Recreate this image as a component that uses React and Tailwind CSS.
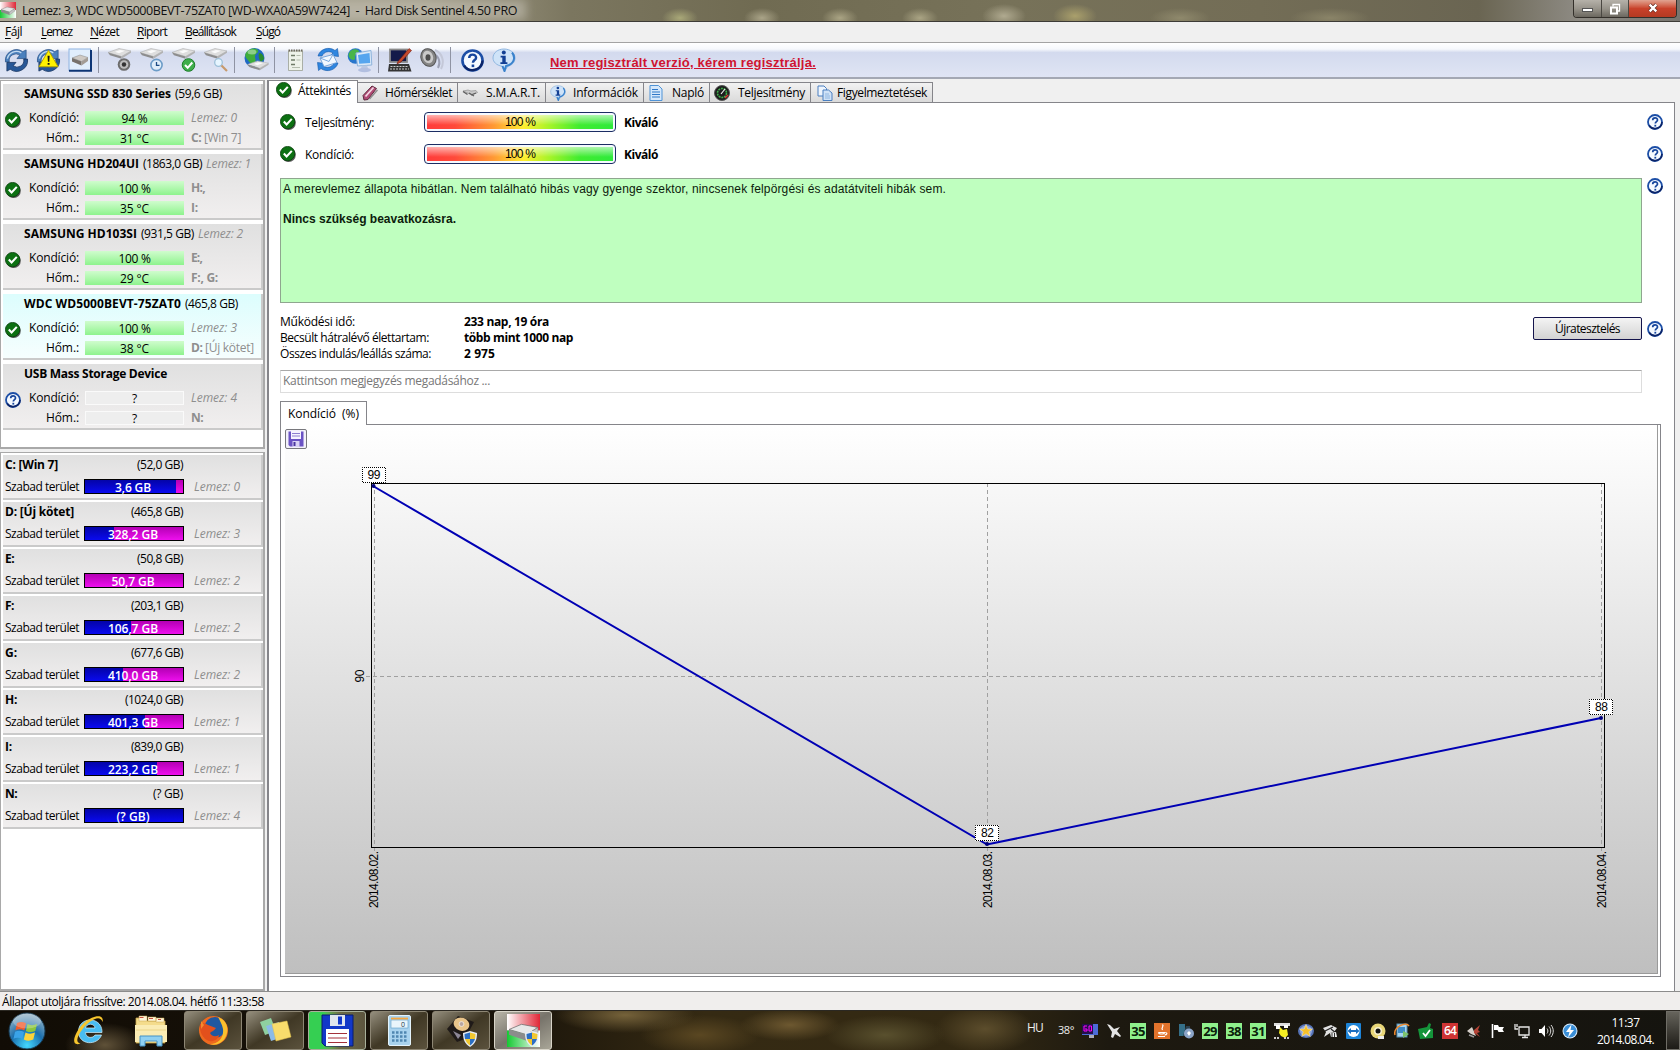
import { useLayoutEffect, useRef, useState } from "react";

/* Text whose tracking is adjusted so that it fills a given width. */
function T({ w, className = "", children }) {
  const ref = useRef(null);
  const [ls, setLs] = useState(0);
  useLayoutEffect(() => {
    const el = ref.current;
    const n = el.textContent.length;
    if (w && n > 1) setLs((w - el.getBoundingClientRect().width) / n);
  }, [w]);
  return (
    <span ref={ref} className={`inline-block whitespace-pre ${className}`} style={{ letterSpacing: ls ? `${ls}px` : undefined }}>
      {children}
    </span>
  );
}

function Check() {
  return (
    <svg className="size-4 shrink-0" viewBox="0 0 16 16">
      <circle cx="8.6" cy="8.8" r="7.2" fill="#222" opacity=".75" />
      <circle cx="7.6" cy="7.6" r="7.2" fill="#0c7012" stroke="#063c0a" strokeWidth=".8" />
      <path d="M3.8 7.6l2.8 2.9 5.2-5.6" fill="none" stroke="#fff" strokeWidth="2.1" />
    </svg>
  );
}

function Help({ size = "size-4" }) {
  return (
    <svg className={`${size} shrink-0`} viewBox="0 0 16 16">
      <circle cx="8" cy="8" r="7" fill="#f4f9ff" stroke="#1c4ea6" strokeWidth="1.8" />
      <path d="M2.2 11.5A7 7 0 0 0 15 8" fill="none" stroke="#0b2468" strokeWidth="1.6" />
      <path d="M5.7 6.3c0-3.2 4.8-3.1 4.8-.3 0 1.7-2.2 1.7-2.2 3.6" fill="none" stroke="#16459c" strokeWidth="1.7" />
      <rect x="7.4" y="10.8" width="1.8" height="1.8" fill="#16459c" />
    </svg>
  );
}

function InfoBubble({ size = "size-[24px]" }) {
  return (
    <svg className={`${size} shrink-0`} viewBox="0 0 24 24">
      <path d="M12 1c6.200 0 11 3.800 11 9 0 4.200-3 7.300-7.200 8.200L12.500 23.500l-2.600-5.300C4.500 17.300 1 14 1 10c0-5.200 4.800-9 11-9z" fill="#cfe3f8" stroke="#8fb6e0" />
      <path d="M20 4.500c3.200 3.800 3 9.500-3 12.500l-3 1-1.500 5-2-5" fill="none" stroke="#3a82cc" strokeWidth="2" />
      <circle cx="11.800" cy="4.500" r="2" fill="#123f94" />
      <path d="M8.600 7.700h5.100v6.600h1.700v1.700H8.400v-1.700h1.900V9.400H8.600z" fill="#123f94" />
    </svg>
  );
}

function Sync({ warn }) {
  return (
    <svg className="size-[25px]" viewBox="0 0 26 26">
      <path d="M1.500 14.500A11.500 11.500 0 0 1 19.500 3.800L23 2v9h-9.500l3-3.500A7 7 0 0 0 5.500 14.500z" fill="#4a80bd" stroke="#2a5288" strokeWidth=".8" />
      <path d="M24.500 11.500A11.500 11.500 0 0 1 6.500 22.200L3 24v-9h9.500l-3 3.500a7 7 0 0 0 11-7z" fill="#275797" stroke="#14305e" strokeWidth=".8" />
      <path d="M3.500 11A9.800 9.800 0 0 1 18 5" fill="none" stroke="#c3daf1" strokeWidth="1.400" />
      {warn && (
        <g>
          <path d="M13 2.500L23 19.500H3z" fill="#fff200" stroke="#b5a300" strokeLinejoin="round" />
          <path d="M12 8h2.200l-.4 6.200h-1.400zM12.100 15.500h2v2h-2z" fill="#111" />
        </g>
      )}
    </svg>
  );
}

function DriveShape({ y = 0 }) {
  return (
    <g transform={`translate(0 ${y})`}>
      <path d="M1 5.500L12 1.500l12 2.500-9.500 5.500z" fill="#dedede" stroke="#b0b0b0" strokeWidth=".6" />
      <path d="M1 5.500l13.500 4v2.300L3 8.200z" fill="#8d8d8d" />
      <path d="M14.500 9.500L24 4v1.800l-9.500 6z" fill="#b2b2b2" />
      <path d="M8 4.800l5-1.800 5 .8-6 2.500z" fill="#fafafa" />
    </g>
  );
}

function DiskIcon({ kind }) {
  return (
    <svg className="size-[26px]" viewBox="0 0 26 26">
      <DriveShape />
      {kind === "speaker" && (
        <g>
          <circle cx="17" cy="17.500" r="6.300" fill="#6c6c6c" />
          <circle cx="17" cy="17.500" r="4.300" fill="#bdbdbd" />
          <circle cx="17" cy="17.500" r="2.200" fill="#333" />
        </g>
      )}
      {kind === "clock" && (
        <g>
          <circle cx="17.500" cy="18" r="5.600" fill="#dfeefa" stroke="#6c9cc8" strokeWidth="1.600" />
          <path d="M17.500 15v3.300h3" fill="none" stroke="#1d4c85" strokeWidth="1.300" />
        </g>
      )}
      {kind === "check" && (
        <g>
          <circle cx="17.500" cy="18" r="6.300" fill="#3fae4b" stroke="#1e7d2b" />
          <path d="M14 18l2.700 2.800 4.600-5.300" fill="none" stroke="#fff" strokeWidth="2" />
        </g>
      )}
      {kind === "lens" && (
        <g>
          <circle cx="15.500" cy="15.500" r="3.800" fill="#e6f5ff" stroke="#9ec0d8" strokeWidth="1.300" />
          <path d="M18.500 18.500l5.500 5.500" stroke="#c79a6d" strokeWidth="2.200" />
        </g>
      )}
    </svg>
  );
}

function DriveBox() {
  return (
    <svg className="size-[24px]" viewBox="0 0 24 24">
      <rect x="1" y="1" width="21.500" height="21.500" fill="#e1eefc" stroke="#8fb4e2" />
      <path d="M1 22.800h22V2" fill="none" stroke="#0d3575" strokeWidth="2" />
      <path d="M4 10l8-3 8 2.500-6.500 4z" fill="#cfcac4" stroke="#888" strokeWidth=".5" />
      <path d="M4 10l9.500 3.500v4L4 13.500z" fill="#77716b" />
      <path d="M13.500 13.500L20 9.500v3.500l-6.500 4.500z" fill="#a39c95" />
    </svg>
  );
}

function GlobeIcon() {
  return (
    <svg className="size-[26px]" viewBox="0 0 26 26">
      <circle cx="11.500" cy="11" r="10" fill="#1f69c4" />
      <path d="M5 3.500c4-3 9-2.500 10 0s-3 3-3 6 2 4-1 6.500-5-2-7-4-3-5 1-8.500z" fill="#3fae3b" />
      <path d="M16 6c3 0 5 3 5 6l-3 3c-2-2-3-6-2-9z" fill="#2a8c2e" />
      <ellipse cx="9" cy="5" rx="4.500" ry="2.500" fill="#fff" opacity=".4" />
      <g transform="translate(3.500 12.500) scale(.92)"><DriveShape /></g>
    </svg>
  );
}

function ReportIcon() {
  return (
    <svg className="size-[24px]" viewBox="0 0 24 24">
      <path d="M4.500 3h14v19.500h-14z" fill="#eef2ea" stroke="#9aa093" strokeWidth=".8" />
      <path d="M4.500 2.500h14" stroke="#6e6a5c" strokeWidth="2" strokeDasharray="1.500 1" />
      <path d="M7 7.500h4M7 12h4M7 16.500h4" stroke="#6f7b68" strokeWidth="1.400" />
      <path d="M12.500 7.500h4M12.500 12h4M8 19.500h8" stroke="#b4bcae" strokeWidth="1.200" />
    </svg>
  );
}

function MailIcon() {
  return (
    <svg className="size-[26px]" viewBox="0 0 26 26">
      <path d="M3 9C5 2 14-1 20 3.500l2.500-2 1 8-8-1L18 6C14 3.500 9 4.500 7 9z" fill="#2f86e0" stroke="#1659a8" strokeWidth=".6" />
      <path d="M23 16c-2 7-11 10-17 5.500l-2.500 2-1-8 8 1L8 19c4 2.500 9 1.500 11-3z" fill="#2f86e0" stroke="#1659a8" strokeWidth=".6" />
      <path d="M5 11l13-3.500 4 8L9 19.500z" fill="#f2f8ff" stroke="#6d9fd8" strokeWidth=".9" />
      <path d="M5 11l9 3.500 4-7" fill="none" stroke="#6d9fd8" strokeWidth=".9" />
    </svg>
  );
}

function NetIcon() {
  return (
    <svg className="size-[26px]" viewBox="0 0 26 26">
      <circle cx="8.500" cy="9" r="7.800" fill="#2876cc" />
      <path d="M3 4.500c4-4 9-2 9 0s-5 3-4 6-3 3-5 1-2-5 0-7z" fill="#49b548" />
      <path d="M9 6l15-2.500.8 14.500-14.300 1z" fill="#dbe9f7" stroke="#8eb4dc" />
      <path d="M11 8l11.500-2 .7 10-11 .8z" fill="#55a5ee" />
      <path d="M15 18.500h5l1.500 4h-8z" fill="#b9c8e2" />
      <ellipse cx="17.500" cy="23" rx="6.500" ry="2.200" fill="#b2bfe0" />
    </svg>
  );
}

function PcIcon() {
  return (
    <svg className="size-[26px]" viewBox="0 0 26 26">
      <rect x="3" y="2.500" width="17" height="12.500" fill="#141a4a" stroke="#8a8a8a" strokeWidth="1.800" />
      <path d="M2 17h20l2.500 7.500H1z" fill="#343434" />
      <path d="M3.500 19.500h17M3 22h19" stroke="#ccc" strokeWidth="1.200" strokeDasharray="2 1" />
      <path d="M11 14.500L22 1.500l2.500 2L14 15l-4 2z" fill="#c4482c" stroke="#6d150b" strokeWidth=".6" />
    </svg>
  );
}

function SpeakerIcon() {
  return (
    <svg className="size-[26px]" viewBox="0 0 26 26">
      <path d="M16 3c7 3 10 11 6 19" fill="none" stroke="#c4c8d8" strokeWidth="2" />
      <path d="M14 7c6 2 8 8 5 14" fill="none" stroke="#9da1b4" strokeWidth="2" />
      <ellipse cx="9.500" cy="10.500" rx="7.500" ry="9" transform="rotate(-20 9.500 10.500)" fill="#858585" stroke="#555" />
      <ellipse cx="9" cy="10" rx="5" ry="6.500" transform="rotate(-20 9 10)" fill="#c9c9c9" />
      <ellipse cx="9" cy="10.500" rx="2.500" ry="3.300" fill="#4d4d4d" />
    </svg>
  );
}

const Slot = ({ children }) => <div className="flex h-full w-8 items-center justify-center">{children}</div>;
const Sep = () => (
  <div className="h-full w-2 py-1 pl-[2px]">
    <div className="h-full w-px bg-[#8f93a3]" />
  </div>
);

function HdsLogo({ size }) {
  return (
    <svg className={size} viewBox="0 0 32 32">
      <defs>
        <linearGradient id="hr" x1="0" x2="1"><stop offset="0" stopColor="#fff" /><stop offset="1" stopColor="#e02636" /></linearGradient>
        <linearGradient id="hg" x1="0" x2="1"><stop offset="0" stopColor="#15c832" /><stop offset="1" stopColor="#fff" /></linearGradient>
      </defs>
      <rect width="32" height="16" fill="url(#hr)" />
      <rect y="16" width="32" height="16" fill="url(#hg)" />
      <path d="M2 15l12-5 16 3-11 7z" fill="#e8e8e8" stroke="#666" strokeWidth=".7" />
      <path d="M2 15l17 5v6L2 20z" fill="#8c8c8c" />
      <path d="M19 20l11-7v5l-11 8z" fill="#c4c4c4" stroke="#777" strokeWidth=".5" />
    </svg>
  );
}

function TitleBar() {
  return (
    <div className="relative flex h-[21px] items-start overflow-hidden bg-[linear-gradient(90deg,#aaa694_0%,#a29d89_25%,#7b765f_34%,#706b52_45%,#777259_60%,#736d56_75%,#6a6552_88%,#8e8b84_94%,#77756f_100%)]">
      <div className="absolute inset-0 bg-[radial-gradient(ellipse_18px_10px_at_680px_18px,#a9a878,transparent),radial-gradient(ellipse_18px_10px_at_762px_18px,#aaa488,transparent),radial-gradient(ellipse_18px_10px_at_840px_18px,#aaa484,transparent),radial-gradient(ellipse_18px_10px_at_920px_18px,#aaa484,transparent),radial-gradient(ellipse_22px_12px_at_1004px_16px,#b0aa90,transparent),radial-gradient(ellipse_22px_12px_at_1075px_16px,#aaa06c,transparent),radial-gradient(ellipse_30px_10px_at_1180px_18px,#8f896c,transparent),radial-gradient(ellipse_40px_10px_at_1330px_18px,#8a8468,transparent)]" />
      <div className="absolute top-0 left-4 h-[20px] w-[510px] bg-[#c4c0b4] opacity-60 blur-[5px]" />
      <div className="relative flex h-[20px] flex-1 items-start">
        <HdsLogo size="size-4 mt-[2px]" />
        <T w={495} className="ml-[6px] text-[12.500px] leading-[21px] text-[#111]">Lemez: 3, WDC WD5000BEVT-75ZAT0 [WD-WXA0A59W7424]  -  Hard Disk Sentinel 4.50 PRO</T>
      </div>
      <div className="relative mr-[3px] flex h-[18px] w-[104px] overflow-hidden rounded-b-[4px] border border-t-0 border-[#332f2a] text-white">
        <div className="flex w-[28px] items-center justify-center border-r border-[#4a4741] bg-linear-to-b from-[#b5b1a9] via-[#98948b] via-50% to-[#6b675f]">
          <div className="mt-[3px] h-[4px] w-[11px] border border-[#555] bg-white" />
        </div>
        <div className="flex w-[27px] items-center justify-center border-r border-[#4a4741] bg-linear-to-b from-[#b5b1a9] via-[#98948b] via-50% to-[#6b675f]">
          <svg className="size-3" viewBox="0 0 12 12"><path d="M4 3.500V1.500h6.500v6.500h-2" fill="none" stroke="#fff" strokeWidth="1.300" /><path d="M2 4.500h6v6H2z" fill="none" stroke="#fff" strokeWidth="2" /></svg>
        </div>
        <div className="flex flex-1 items-center justify-center bg-linear-to-b from-[#e0a391] via-[#c8412a] via-50% to-[#b43a22]">
          <svg className="-mt-[2px] h-[10px] w-[12px]" viewBox="0 0 14 12"><path d="M3 2l8 8M11 2l-8 8" stroke="#5a2a20" strokeWidth="4.400" /><path d="M3 2l8 8M11 2l-8 8" stroke="#fff" strokeWidth="2.800" /></svg>
        </div>
      </div>
    </div>
  );
}

const MENU = [
  ["F", "ájl", 17, "ml-[5px]"],
  ["L", "emez", 31, "ml-[19px]"],
  ["N", "ézet", 29, "ml-[18px]"],
  ["R", "iport", 30, "ml-[18px]"],
  ["B", "eállítások", 51, "ml-[18px]"],
  ["S", "úgó", 24, "ml-[20px]"],
];

function Toolbar() {
  return (
    <div className="flex h-[36px] border-b-2 border-[#a4a8b4] bg-[linear-gradient(180deg,#fff_0%,#f6f8fc_18%,#d3daee_28%,#dbe1f2_75%,#e0e5f5_100%)]">
      <Slot><Sync /></Slot>
      <Slot><Sync warn /></Slot>
      <Slot><DriveBox /></Slot>
      <Sep />
      <Slot><DiskIcon kind="speaker" /></Slot>
      <Slot><DiskIcon kind="clock" /></Slot>
      <Slot><DiskIcon kind="check" /></Slot>
      <Slot><DiskIcon kind="lens" /></Slot>
      <Sep />
      <Slot><GlobeIcon /></Slot>
      <Sep />
      <Slot><ReportIcon /></Slot>
      <Slot><MailIcon /></Slot>
      <Slot><NetIcon /></Slot>
      <Sep />
      <Slot><PcIcon /></Slot>
      <Slot><SpeakerIcon /></Slot>
      <Sep />
      <Slot><Help size="size-[23px]" /></Slot>
      <Slot><InfoBubble /></Slot>
      <T w={266} className="ml-[30px] pt-[3px] font-['Liberation_Sans',sans-serif] text-[13px] leading-[34px] font-bold text-[#cf1430] underline">Nem regisztrált verzió, kérem regisztrálja.</T>
    </div>
  );
}

const DISKS = [
  { name: "SAMSUNG SSD 830 Series", nw: 147, size: "(59,6 GB)", sw: 47, tag: "", cond: "94 %", cw: 26, temp: "31 °C", r1: "Lemez: 0", r1w: 46, it: true, r2: "C: ", r2b: "[Win 7]", r2w: 13, r2bw: 37 },
  { name: "SAMSUNG HD204UI", nw: 115, size: "(1863,0 GB)", sw: 59, tag: "Lemez: 1", cond: "100 %", cw: 32, temp: "35 °C", r1: "H:,", r1w: 14, r2: "I:", r2w: 7 },
  { name: "SAMSUNG HD103SI", nw: 113, size: "(931,5 GB)", sw: 53, tag: "Lemez: 2", cond: "100 %", cw: 32, temp: "29 °C", r1: "E:,", r1w: 11, r2: "F:, G:", r2w: 27 },
  { name: "WDC WD5000BEVT-75ZAT0", nw: 157, size: "(465,8 GB)", sw: 53, tag: "", cond: "100 %", cw: 32, temp: "38 °C", r1: "Lemez: 3", r1w: 46, it: true, r2: "D: ", r2b: "[Új kötet]", r2w: 14, r2bw: 49, sel: true },
  { name: "USB Mass Storage Device", nw: 143, size: "", sw: 0, tag: "", cond: "?", cw: 0, temp: "?", r1: "Lemez: 4", r1w: 46, it: true, r2: "N:", r2w: 12, unknown: true },
];

function DiskBar({ unknown, children }) {
  return (
    <div className={`ml-[6px] flex h-[14px] w-[99px] items-center justify-center ${unknown ? "border border-[#fafafa] bg-[#eee]" : "bg-linear-to-b from-[#cffccd] to-[#8df38d]"}`}>{children}</div>
  );
}

function Disk({ d }) {
  return (
    <div className={`flex h-[66px] w-[260px] border-r-2 border-b-2 border-[#cacaca] ${d.sel ? "bg-linear-to-b from-[#dcfdfd] to-[#f6fefe]" : "bg-linear-to-b from-[#e0e0e0] to-[#f1efef]"}`}>
      <div className="w-[21px] pt-[28px] pl-[2px]">{d.unknown ? <Help /> : <Check />}</div>
      <div className="flex-1 whitespace-nowrap">
        <div className="mb-[5px] flex h-[19px] items-center gap-[4px] leading-[19px]">
          <T w={d.nw} className="font-bold">{d.name}</T>
          {d.size && <T w={d.sw}>{d.size}</T>}
          {d.tag && <T w={45} className="text-[#8e8e8e] italic">{d.tag}</T>}
        </div>
        <div className="flex h-5 items-center leading-5">
          <div className="flex w-[55px] justify-end"><T w={50}>Kondíció:</T></div>
          <DiskBar unknown={d.unknown}><T w={d.cw} className="mt-px">{d.cond}</T></DiskBar>
          <T w={d.r1w} className={`ml-[7px] text-[#8e8e8e] ${d.it ? "italic" : "font-bold"}`}>{d.r1}</T>
        </div>
        <div className="flex h-5 items-center leading-5">
          <div className="flex w-[55px] justify-end"><T w={33}>Hőm.:</T></div>
          <DiskBar unknown={d.unknown}><T w={d.unknown ? 0 : 29} className="mt-px">{d.temp}</T></DiskBar>
          <T w={d.r2w} className="ml-[7px] font-bold text-[#8e8e8e]">{d.r2}</T>
          {d.r2b && <T w={d.r2bw} className="text-[#8e8e8e]">{d.r2b}</T>}
        </div>
      </div>
    </div>
  );
}

const VOLS = [
  ["C: [Win 7]", 53, "(52,0 GB)", 46, "3,6 GB", 36, 93, 0],
  ["D: [Új kötet]", 69, "(465,8 GB)", 52, "328,2 GB", 50, 30, 3],
  ["E:", 9, "(50,8 GB)", 46, "50,7 GB", 43, 0, 2],
  ["F:", 9, "(203,1 GB)", 52, "106,7 GB", 50, 47, 2],
  ["G:", 12, "(677,6 GB)", 52, "410,0 GB", 50, 39, 2],
  ["H:", 12, "(1024,0 GB)", 58, "401,3 GB", 50, 61, 1],
  ["I:", 7, "(839,0 GB)", 52, "223,2 GB", 50, 73, 1],
  ["N:", 12, "(? GB)", 30, "(? GB)", 33, 100, 4],
];

function Volume({ v }) {
  return (
    <div className="h-[45px] w-[260px] border-r-2 border-b-2 border-[#cacaca] bg-linear-to-b from-[#e0e0e0] to-[#f1efef] pl-[2px]">
      <div className="flex h-[19px] w-[178px] items-center justify-between leading-[19px]">
        <T w={v[1]} className="font-bold">{v[0]}</T>
        <T w={v[3]}>{v[2]}</T>
      </div>
      <div className="mt-1 flex h-[18px] items-center leading-[18px]">
        <T w={74}>Szabad terület</T>
        <div className="ml-[5px] flex h-[15px] w-[100px] border border-black bg-linear-to-b from-[#b400b4] to-[#ee10ee]">
          <div className="h-full shrink-0 bg-linear-to-b from-[#0404a8] to-[#0a0af0]" style={{ width: `${v[6]}%` }} />
          <div className="relative w-0 flex-none">
            <div className="absolute top-[-1px] flex w-[98px] justify-center leading-[17px] font-semibold text-white" style={{ left: `${-v[6] * 0.98 - 1}px` }}>
              <T w={v[5]}>{v[4]}</T>
            </div>
          </div>
        </div>
        <T w={46} className="ml-[10px] text-[#8e8e8e] italic">{`Lemez: ${v[7]}`}</T>
      </div>
    </div>
  );
}

function Sidebar() {
  return (
    <div className="flex w-[265px] shrink-0 flex-col">
      <div className="h-[369px] border border-r-2 border-b-2 border-[#a9a9a9] bg-white pt-[3px] pl-[2px]">
        <div className="flex flex-col gap-1">{DISKS.map((d) => <Disk key={d.name} d={d} />)}</div>
      </div>
      <div className="mt-[3px] h-[540px] border border-r-2 border-b-2 border-[#a9a9a9] bg-white pt-[2px] pl-[2px]">
        <div className="flex flex-col gap-[2px]">{VOLS.map((v) => <Volume key={v[0]} v={v} />)}</div>
      </div>
    </div>
  );
}

const Tab = ({ icon, w, tw, children }) => (
  <div className={`flex h-[20px] items-center justify-between border-t border-r border-[#85858a] border-l-white bg-linear-to-b from-[#f2f2f2] to-[#dadada] pr-[5px] pl-[4px] ${w}`}>
    {icon}
    <T w={tw}>{children}</T>
  </div>
);

function Tabs() {
  return (
    <div className="flex h-[23px] items-end">
      <div className="z-10 flex h-[23px] w-[91px] items-center border-t border-r border-l-2 border-[#85858a] bg-white pl-[7px]">
        <div className="-mt-[4px] flex items-center gap-[6px]"><Check /><T w={53} className="mt-[2px]">Áttekintés</T></div>
      </div>
      <div className="flex h-[21px] items-start border-b border-[#85858a]">
        <Tab w="w-[100px]" tw={67} icon={<svg className="size-4" viewBox="0 0 16 16"><path d="M1 10.500L10 1l4.500 2.500L6 14.500l-4 .5z" fill="#b04a74" stroke="#5d2a3d" /><path d="M3.500 11.500L11.500 2.500" stroke="#f3d7e2" strokeWidth="1.800" /><path d="M7.500 14L15.500 5" stroke="#8d8d8d" strokeWidth="1.300" /></svg>}>Hőmérséklet</Tab>
        <Tab w="w-[88px]" tw={54} icon={<svg className="h-4 w-[16px]" viewBox="0 0 16 16"><path d="M1 6l5-1 3 1 5-.500 1.500 2L10 10z" fill="#c9c9c9" stroke="#888" strokeWidth=".6" /><path d="M1 6.500l4.500 3M7 8l5 3M9 10l5-2" stroke="#5e5e5e" strokeWidth="1.300" /></svg>}>S.M.A.R.T.</Tab>
        <Tab w="w-[98px]" tw={65} icon={<InfoBubble size="size-[16px]" />}>Információk</Tab>
        <Tab w="w-[66px]" tw={32} icon={<svg className="size-4" viewBox="0 0 16 16"><path d="M2 .5h8.500L14 4v11.500H2z" fill="#d5e8fb" stroke="#4f93d6" /><path d="M4 4.500h6M4 7h8M4 9.500h8M4 12h8" stroke="#2f78c8" strokeWidth="1.200" /></svg>}>Napló</Tab>
        <Tab w="w-[101px]" tw={67} icon={<svg className="size-4" viewBox="0 0 16 16"><circle cx="8" cy="8" r="7.500" fill="#1d1d1d" stroke="#555" /><circle cx="8" cy="8" r="4.500" fill="none" stroke="#3fae4b" strokeWidth="1.600" strokeDasharray="2 .8" /><path d="M7 9l4-5" stroke="#f2f2f2" strokeWidth="1.200" /><path d="M11 13l3-3" stroke="#d33" strokeWidth="1.500" /></svg>}>Teljesítmény</Tab>
        <Tab w="w-[122px]" tw={90} icon={<svg className="ml-[2px] size-4" viewBox="0 0 16 16"><path d="M1 1h6l2.500 2.500V11H1z" fill="#eef5fd" stroke="#4a7fc0" /><path d="M6 5h5.500L15 8v7.500H6z" fill="#cfe2f7" stroke="#4a7fc0" /><path d="M8 9h4M8 11h5M8 13h5" stroke="#8fb6e0" /></svg>}>Figyelmeztetések</Tab>
      </div>
      <div className="h-px flex-1 bg-[#85858a]" />
      <div className="w-[5px]" />
    </div>
  );
}

function Gauge({ label, lw }) {
  return (
    <div className="flex h-8 items-center">
      <div className="flex w-[143px] items-center gap-[9px]"><Check /><T w={lw} className="mt-px">{label}</T></div>
      <div className="ml-px h-[20px] w-[192px] rounded-[4px] border border-[#1b2d63] bg-[#f4f9ff] p-[2px]">
        <div className="relative flex h-full items-center justify-center bg-[linear-gradient(90deg,#ff3b3b_0%,#ff4a3a_15%,#ff9a34_36%,#ffee30_52%,#a4f428_66%,#40ec30_82%,#2eea3c_100%)]">
          <div className="absolute inset-x-0 top-0 h-[10px] bg-linear-to-b from-white/60 to-transparent" />
          <T w={30} className="relative -mt-[1px] font-['Liberation_Sans',sans-serif] text-[12px] leading-[14px]">100 %</T>
        </div>
      </div>
      <T w={34} className="mt-px ml-2 font-bold">Kiváló</T>
      <div className="flex-1" />
      <Help />
    </div>
  );
}

/* Health history; the drawing surface starts at the chart's upper left corner. */
function Chart() {
  const dates = [[88.5, "2014.08.02."], [702, "2014.08.03."], [1316, "2014.08.04."]];
  const marks = [[89.500, 50, 99], [703, 408, 82], [1317, 282, 88]];
  return (
    <svg className="absolute inset-0 h-full w-full font-['Liberation_Sans',sans-serif] text-[12px]">
      <g fill="none" stroke="#a0a0a0" strokeDasharray="4 3">
        <path d="M89.500 58v371M702.500 58v371M1316.500 58v371M81 251.500h1238" />
      </g>
      <rect x="86.500" y="58.500" width="1233" height="364" fill="none" stroke="#000" />
      <path d="M88 61L702 419.500 1316 293" fill="none" stroke="#0000b4" strokeWidth="2" />
      <circle cx="88.500" cy="61" r="2" fill="#00007c" />
      <circle cx="702" cy="419" r="2" fill="#00007c" />
      <circle cx="1316" cy="293" r="2" fill="#00007c" />
      {marks.map(([x, y, v]) => (
        <g key={v}>
          <rect x={Math.round(x) - 12.500} y={y - 7.500} width="23" height="15" fill="#fff" stroke="#fff" />
          <rect x={Math.round(x) - 12.500} y={y - 7.500} width="23" height="15" fill="none" stroke="#000" strokeDasharray="1 1" strokeDashoffset=".5" />
          <text x={x - 7} y={y + 4} textLength="13">{v}</text>
        </g>
      ))}
      {dates.map(([x, s]) => (
        <text key={s} transform={`translate(${x + 4.500} 483) rotate(-90)`} textLength="57">{s}</text>
      ))}
      <text transform="translate(79 257.500) rotate(-90)" textLength="13">90</text>
    </svg>
  );
}

function Main() {
  return (
    <div className="ml-[2px] flex flex-1 flex-col">
      <Tabs />
      <div className="flex flex-1 pr-[5px]">
        <div className="flex-1 border-r border-l-2 border-[#85858a] bg-white pr-[11px] pl-[11px]">
          <div className="pt-[3px]">
            <Gauge label="Teljesítmény:" lw={69} />
            <Gauge label="Kondíció:" lw={49} />
          </div>
          <div className="mt-[8px] flex items-start justify-between">
            <div className="h-[125px] w-[1362px] border border-[#8fa68f] bg-[#bfffbf] pt-[3px] pl-[2px] font-['Liberation_Sans',sans-serif] text-[12px] leading-[15px] text-[#0c200c]">
              <div><T w={663}>A merevlemez állapota hibátlan. Nem található hibás vagy gyenge szektor, nincsenek felpörgési és adatátviteli hibák sem.</T></div>
              <div className="mt-[15px] font-bold"><T w={173}>Nincs szükség beavatkozásra.</T></div>
            </div>
            <Help />
          </div>
          <div className="mt-[11px] flex items-start justify-between">
            <div className="grid grid-cols-[184px_auto] justify-items-start leading-4">
              <T w={75}>Működési idő:</T><T w={85} className="font-bold">233 nap, 19 óra</T>
              <T w={149}>Becsült hátralévő élettartam:</T><T w={109} className="font-bold">több mint 1000 nap</T>
              <T w={151}>Összes indulás/leállás száma:</T><T w={31} className="font-bold">2 975</T>
            </div>
            <div className="mt-[3px] flex items-center gap-[5px]">
              <div className="flex h-[23px] w-[109px] items-center justify-center rounded-[2px] border border-[#14144c] bg-linear-to-b from-[#f4f4f4] to-[#d3d3d3]"><T w={65}>Újratesztelés</T></div>
              <Help />
            </div>
          </div>
          <div className="mt-[8px] h-[23px] w-[1362px] border border-[#ddd] border-t-[#a9a9a9] pl-[2px] leading-[20px] text-[#777]"><T w={207}>Kattintson megjegyzés megadásához ...</T></div>
          <div className="relative z-10 mt-[8px] flex h-[24px] w-[87px] items-center justify-center border border-b-0 border-[#85858a] bg-white"><T w={71}>{"Kondíció  (%)"}</T></div>
          <div className="-mt-px h-[553px] w-[1381px] border border-[#85858a] bg-white pr-[2px] pb-[2px] pl-[4px]">
            <div className="relative h-full border-r border-b border-[#9a9a9a] bg-linear-to-b from-white to-[#bfbfbf]">
              <Chart />
              <div className="relative top-[4px] flex h-[20px] w-[22px] items-center justify-center rounded-[2px] border border-[#77777c] bg-[#f3f1fa]">
                <svg className="size-4" viewBox="0 0 16 16"><path d="M.5.500h15v15H2L.5 14z" fill="#6a52c4" /><rect x="3" y="0" width="10" height="8" fill="#f5f3ff" /><path d="M4 2.500h8M4 5h8" stroke="#8d7fd0" /><rect x="4.500" y="10" width="7" height="6" fill="#d9d2f5" /><rect x="5.500" y="11" width="2" height="4" fill="#4a349f" /></svg>
              </div>
            </div>
          </div>
        </div>
      </div>
    </div>
  );
}

const TaskButton = ({ active, children }) => (
  <div className={`flex h-[39px] w-[58px] items-center justify-center rounded-[3px] border ${active ? "border-[#d8d4c8] bg-linear-to-br from-[#b9b5a8] via-[#77736a] to-[#a9a698]" : "border-[#8d8674] bg-linear-to-br from-[#958f7e] via-[#403825] to-[#5b523d]"}`}>{children}</div>
);

const Shield = () => (
  <g transform="translate(18 17)">
    <path d="M0 2l7-2 7 2c0 7-2 11-7 14C2 13 0 9 0 2z" fill="#e8eef5" />
    <path d="M1.500 3L7 1.500V8H2C1.700 6.500 1.500 5 1.500 3z" fill="#2b6fc4" /><path d="M7 1.500L12.500 3c0 2-.2 3.500-.5 5H7z" fill="#f1c830" />
    <path d="M2 8h5v6.500C4.500 13 3 11 2 8z" fill="#f1c830" /><path d="M7 8h5c-1 3-2.500 5-5 6.500z" fill="#2b6fc4" />
  </g>
);

const Num = ({ children }) => <div className="flex size-4 items-center justify-center bg-[#8ff08c] text-[13px] leading-4 font-bold tracking-[-0.8px] text-[#0a200a]">{children}</div>;
const Tray = ({ children }) => <svg className="size-4" viewBox="0 0 16 16">{children}</svg>;

function Taskbar() {
  return (
    <div className="flex h-[40px] border-t border-[#2b2822] bg-[radial-gradient(ellipse_70px_18px_at_625px_4px,#75623a,transparent),radial-gradient(ellipse_40px_22px_at_105px_34px,#5f5138,transparent),radial-gradient(ellipse_60px_20px_at_700px_24px,#5a4722,transparent),radial-gradient(ellipse_50px_16px_at_790px_14px,#6d5830,transparent),radial-gradient(ellipse_60px_20px_at_885px_24px,#59502e,transparent),radial-gradient(ellipse_50px_24px_at_985px_18px,#5c4d2c,transparent),linear-gradient(90deg,#110c05_0%,#1a140a_30%,#352a13_42%,#332913_58%,#1d1910_66%,#15140f_100%)]">
      <div className="flex w-[184px] items-center">
        <svg className="ml-[8px] size-[38px]" viewBox="0 0 38 38">
          <defs><radialGradient id="orb" cx=".5" cy=".9" r=".9"><stop offset="0" stopColor="#43d8ff" /><stop offset=".5" stopColor="#1b6fae" /><stop offset="1" stopColor="#9fb8c6" /></radialGradient></defs>
          <circle cx="19" cy="19" r="18" fill="url(#orb)" stroke="#16384f" />
          <path d="M9 11c3-1.500 6-1.500 9 .3l-1.600 7.200c-3-1.600-6-1.600-9-.2z" fill="#ef5a2a" />
          <path d="M19.500 12c3 1.500 6 1.500 9.500 0l-1.700 7c-3.200 1.500-6.300 1.400-9.400-.1z" fill="#8cc63e" />
          <path d="M7 19.800c3-1.400 6-1.400 9 .2l-1.700 7c-3-1.600-6-1.500-8.800-.2z" fill="#3aa3e8" />
          <path d="M17.500 20.500c3 1.500 6 1.600 9.500.1l-1.700 7c-3.200 1.400-6.400 1.400-9.500-.2z" fill="#fcd33a" />
          <ellipse cx="19" cy="9" rx="14" ry="7.500" fill="#fff" opacity=".25" />
        </svg>
        <svg className="ml-[27px] size-[33px]" viewBox="0 0 33 33">
          <path d="M29 18.500H12.500c.3 5.500 7 6.500 9.500 2.500h6.500C24.500 32 5.500 31.500 5.500 17.500c0-15.500 24-15.500 23.500 1zM12.500 14H22c-.5-5-8.500-5-9.500 0z" fill="#49bdf2" stroke="#d5f2ff" strokeWidth=".7" />
          <path d="M29.500 8C32-2 16 2 8 12 0 22-2 33 7.500 29.500 2 29 4 22 10 14.500S27-.5 29.500 8z" fill="#f7c52d" />
        </svg>
        <svg className="ml-[28px] size-[34px]" viewBox="0 0 34 34">
          <path d="M2 4h9l2 3h18v22H2z" fill="#f4dc8c" stroke="#c8a54c" strokeWidth=".8" />
          <path d="M5 2h8v5H5zM14 3h8v4h-8zM22 4h8v4h-8z" fill="#fff6d8" stroke="#c8a54c" strokeWidth=".5" />
          <path d="M5.500 3.500h4M15 4.500h4M24 5.500h3" stroke="#c84d3b" strokeWidth="1.200" />
          <path d="M1 11h32v17H1z" fill="#faecb4" /><path d="M2 16h30" stroke="#ead488" />
          <path d="M6 32V22h22v10h-5v-5H11v5z" fill="#8fd0f2" stroke="#4792c4" />
        </svg>
      </div>
      <div className="flex gap-[4px]">
        <TaskButton>
          <svg className="size-[31px]" viewBox="0 0 31 31"><circle cx="15.500" cy="15.500" r="14.500" fill="#ee6a1f" /><circle cx="17" cy="12.500" r="10.500" fill="#1f58a0" /><path d="M20 2c9 3 12 13 7 21-3 5-9 8-15 6 9 0 14-7 13-15-1-5-3-8-5-12z" fill="#fbc02d" /><path d="M2 9c2-1 5-1 8 1 3 1 5 2 8 3-2 3-4 3-6 5 2 4 6 4 9 2-1 5-6 7-10 6C5 24 1 17 2 9z" fill="#e2501c" /><path d="M3 6l3 4-3 4z" fill="#f58a2b" /></svg>
        </TaskButton>
        <TaskButton>
          <svg className="size-[34px]" viewBox="0 0 34 34"><path d="M2 8l11-4 5 13-11 4z" fill="#8fd0a0" /><path d="M8 12l13-4 4 15-12 4z" fill="#8bbbe8" /><path d="M14 10l15-3 4 16-15 4z" fill="#f8dc6c" stroke="#e3c04a" strokeWidth=".5" /></svg>
        </TaskButton>
        <div className="flex h-[39px] w-[58px] items-center justify-center rounded-[3px] border border-[#a8b09a] bg-linear-to-r from-[#35cf52] from-25% via-[#6b6b45] via-55% to-[#5d553f]">
          <svg className="size-[33px]" viewBox="0 0 33 33"><path d="M1 1h31v31H4l-3-3z" fill="#1238c8" stroke="#081c6e" /><rect x="9" y="1" width="15" height="11" fill="#dfe5ee" /><rect x="17" y="2.500" width="4" height="8" fill="#1238c8" /><rect x="5" y="15" width="23" height="17" fill="#fff" /><path d="M7 19.500h19M7 24h19M7 28.500h19" stroke="#a3313a" strokeWidth="1.200" /></svg>
        </div>
        <TaskButton>
          <svg className="h-[31px] w-[23px]" viewBox="0 0 23 31"><rect x=".5" y=".5" width="22" height="30" rx="1.500" fill="#a9d3ee" stroke="#e3f3fc" /><rect x="3" y="5" width="17" height="8" fill="#e9f5fb" stroke="#5c9cc6" strokeWidth=".6" /><path d="M3 3.500h17" stroke="#f5a742" strokeWidth="1.800" /><text x="13" y="12" fontSize="7" fill="#234">0</text><path d="M4 17.500h15M4 21.500h15M4 25.500h15" stroke="#4f86b0" strokeWidth="2.500" strokeDasharray="2.500 1.500" /></svg>
        </TaskButton>
        <TaskButton>
          <svg className="size-[33px]" viewBox="0 0 33 33"><path d="M2 15L13 2l16 6-9 17-8 3z" fill="#1f1a18" /><ellipse cx="16.500" cy="10" rx="8" ry="6.500" transform="rotate(20 16 10)" fill="#e8c48a" /><circle cx="16.500" cy="10" r="2.400" fill="#b7a5a0" stroke="#fff" strokeWidth=".6" /><path d="M8 17l8 4-3 4z" fill="#8d8796" /><Shield /></svg>
        </TaskButton>
        <TaskButton active>
          <div className="relative size-[33px]"><HdsLogo size="size-[33px]" /><svg className="absolute inset-0 size-[33px]" viewBox="0 0 33 33"><Shield /></svg></div>
        </TaskButton>
      </div>
      <div className="flex-1" />
      <div className="flex h-[39px] items-center gap-[8px] text-[#eee]">
        <T w={16} className="-mt-[5px] mr-[7px]">HU</T>
        <T w={16} className="text-[11px]">38°</T>
        <Tray><rect x="0" y="1" width="16" height="11" fill="#4b6bd8" /><rect x="0" y="1" width="11" height="10" fill="#24104c" /><path d="M2 3h3M2 3v5h3V6H3M7 3h2.500v5H7z" stroke="#f0f" fill="none" /><path d="M7 12h5v3H7z" fill="#aab" /></Tray>
        <Tray><path d="M1 1l3 1 4 4 6-2-3 4 4 5-1 1-5-3-2 4-2-1 1-5z" fill="#e4e4e4" /></Tray>
        <Num>35</Num>
        <Tray><rect width="16" height="16" fill="#e2732c" /><path d="M8.500 1.500c2 2-2 3 0 5.500M4.500 9.500h6c0 2-6 2-6 0M4 13.500h7M11 9.500c3 0 2 2.500-.5 2.500" stroke="#fff" fill="none" strokeWidth="1.200" /></Tray>
        <Tray><path d="M1 1h6v12H1z" fill="#356f88" /><path d="M8 3h4v10H5z" fill="#29404e" /><circle cx="11" cy="10.500" r="5" fill="#8ba4c8" /><path d="M9 10l2 3 2-3-2-2z" fill="#fff" /></Tray>
        <Num>29</Num>
        <Num>38</Num>
        <Num>31</Num>
        <Tray><path d="M0 0h16v3H0z" fill="#ddd" /><path d="M2 2h4v4H2zM10 2h4v3h-4z" fill="#fff" /><path d="M6 4l3 3 4-1 1 6-3 3-4-2-2-3z" fill="#f5ee22" /><path d="M0 15h5M10 15h6" stroke="#ccc" strokeWidth="2" strokeDasharray="2 1" /></Tray>
        <Tray><ellipse cx="8" cy="8" rx="8" ry="7" fill="#5573b8" /><ellipse cx="8" cy="8" rx="6" ry="5.500" fill="#93a6da" /><path d="M8 1.500l1.800 4.500H14.500l-3.700 2.800L12.300 13.500 8 10.800 3.700 13.500l1.500-4.700L1.500 6h4.700z" fill="#f6c02a" stroke="#fff3c0" strokeWidth=".5" /></Tray>
        <Tray><path d="M1 5l8-3 6 3-3 4-4 1-6 4 2-5z" fill="#e2e2e2" /><path d="M3 8l8-4M9 6l5 4" stroke="#222" strokeWidth="1.200" /><path d="M8 10l6-1 1 5h-6z" fill="#eee" /><path d="M10 10v4M12.500 10v4" stroke="#333" /></Tray>
        <Tray><rect width="15" height="16" rx="1" fill="#1d84d8" /><circle cx="7.500" cy="8" r="6" fill="#fff" /><path d="M1.500 8L5 5v2h5V5l3.500 3L10 11V9H5v2z" fill="#1d6fc0" /></Tray>
        <Tray><circle cx="8" cy="8" r="7.500" fill="#e8d678" /><circle cx="8" cy="8" r="4" fill="#f7f1cf" /><circle cx="8" cy="8" r="2.500" fill="#111" /><path d="M8 13h6v3H8z" fill="#eee" /></Tray>
        <Tray><rect x="3" y="1" width="10" height="13" fill="#a8d4ee" stroke="#568fb4" /><path d="M4 4h7v6H4z" fill="#3f8cc8" /><path d="M1 12C-1 4 12-2 15 3" fill="none" stroke="#f08a2e" strokeWidth="1.500" /><path d="M9 8l6 3-6 4z" fill="#7cc36c" /></Tray>
        <Tray><path d="M0 6l9-2 2-4 2 1-1 4 3 1v9L2 16z" fill="#14953a" /><path d="M5 10l2.500 3L12 7" stroke="#fff" fill="none" strokeWidth="1.800" /></Tray>
        <div className="flex size-4 items-center justify-center bg-[#cf3434] text-[12px] leading-4 font-semibold tracking-[-0.800px] text-white">64</div>
        <Tray><path d="M1 8l5-4 4 9-5-2z" fill="#d7d0ca" /><path d="M8 7l6-5-2 5 2 2-3 1 3 4-6-4z" fill="#b34336" /><path d="M3 12l5 2" stroke="#999" strokeWidth="1.500" /></Tray>
        <Tray><path d="M2.500 1v14" stroke="#fff" strokeWidth="1.600" /><path d="M4 2h4l1 2h5l-1.500 2.500L14 9H8.500L7.500 7H4z" fill="#fff" /></Tray>
        <Tray><path d="M5 4h10v8H5zM8 14.500h6M11 12v2M1 1v5h3M3 1v3" fill="none" stroke="#e6e6e6" strokeWidth="1.300" /></Tray>
        <Tray><path d="M1 6h2.500L7 2v12l-3.500-4H1z" fill="#fff" /><path d="M9 5.500c1.200 1.500 1.200 3.500 0 5M11 3.500c2.300 2.600 2.300 6.400 0 9M13 2c3 3.500 3 8.500 0 12" fill="none" stroke="#ddd" /></Tray>
        <Tray><circle cx="8" cy="8" r="7.500" fill="#dcecfa" /><circle cx="8" cy="8" r="6.500" fill="#3a8fd8" /><path d="M9.500 1.500L4 9h3.500L6 14.500 12 7H8.500z" fill="#fff" /></Tray>
      </div>
      <div className="ml-[19px] flex w-[57px] flex-col items-center pt-[3px] leading-[17px] text-white">
        <T w={28}>11:37</T>
        <T w={57}>2014.08.04.</T>
      </div>
      <div className="ml-[12px] w-[14px] border border-[#6f6d66] bg-linear-to-b from-[#66645c] to-[#1d1b16]" />
    </div>
  );
}

export default function App() {
  return (
    <div className="flex h-[1050px] w-[1680px] flex-col overflow-hidden bg-[#f0f0f0] font-['Open_Sans','Noto_Sans',sans-serif] text-[12px] text-black">
      <TitleBar />
      <div className="flex h-[22px] items-center border-t border-b border-t-[#3d3b36] border-b-[#a3a3a3] bg-[#f0f0f0] leading-[20px]">
        {MENU.map(([a, b, w, m]) => (
          <T key={a} w={w} className={m}><span className="underline underline-offset-2">{a}</span>{b}</T>
        ))}
      </div>
      <Toolbar />
      <div className="mt-px flex h-[912px] border-b border-[#8c8c8c]">
        <Sidebar />
        <Main />
      </div>
      <div className="h-[18px] bg-[#f0eeed] pl-[2px] leading-[20px]"><T w={262}>Állapot utoljára frissítve: 2014.08.04. hétfő 11:33:58</T></div>
      <Taskbar />
    </div>
  );
}
